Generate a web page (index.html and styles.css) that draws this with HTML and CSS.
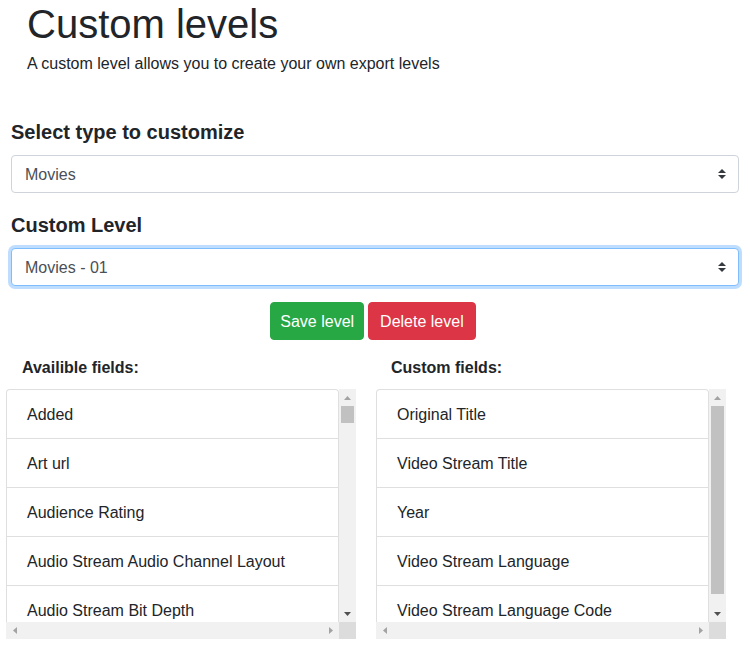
FILE: index.html
```html
<!DOCTYPE html>
<html lang="en">
<head>
<meta charset="utf-8">
<title>Custom levels</title>
<link rel="stylesheet" href="styles.css">
</head>
<body>
<header class="intro">
  <h1 class="title">Custom levels</h1>
  <p class="lead">A custom level allows you to create your own export levels</p>
</header>

<section class="form">
  <h5 class="form-label">Select type to customize</h5>
  <div class="select">
    <span class="select-value">Movies</span>
    <svg class="select-arrow" width="8" height="10" viewBox="0 0 4 5"><path d="M2 0L0 2h4zm0 5L0 3h4z" fill="#343a40"/></svg>
  </div>

  <h5 class="form-label form-label-spaced">Custom Level</h5>
  <div class="select select-focus">
    <span class="select-value">Movies - 01</span>
    <svg class="select-arrow" width="8" height="10" viewBox="0 0 4 5"><path d="M2 0L0 2h4zm0 5L0 3h4z" fill="#343a40"/></svg>
  </div>

  <div class="actions">
    <button class="btn btn-success">Save level</button>
    <button class="btn btn-danger">Delete level</button>
  </div>
</section>

<section class="fields">
  <div class="field-col">
    <div class="field-label">Availible fields:</div>
    <div class="scrollbox">
      <div class="viewport">
        <ul class="list-group">
          <li class="list-item">Added</li>
          <li class="list-item">Art url</li>
          <li class="list-item">Audience Rating</li>
          <li class="list-item">Audio Stream Audio Channel Layout</li>
          <li class="list-item">Audio Stream Bit Depth</li>
        </ul>
      </div>
      <div class="vbar">
        <div class="sb-btn"><svg width="7" height="4" viewBox="0 0 7 4"><path d="M0 4L3.5 0L7 4z" fill="#a3a3a3"/></svg></div>
        <div class="vtrack"><div class="thumb thumb-small"></div></div>
        <div class="sb-btn"><svg width="7" height="4" viewBox="0 0 7 4"><path d="M0 0L3.5 4L7 0z" fill="#505050"/></svg></div>
      </div>
      <div class="hbar">
        <div class="sb-btn"><svg width="4" height="7" viewBox="0 0 4 7"><path d="M4 0L0 3.5L4 7z" fill="#a3a3a3"/></svg></div>
        <div class="sb-btn"><svg width="4" height="7" viewBox="0 0 4 7"><path d="M0 0L4 3.5L0 7z" fill="#a3a3a3"/></svg></div>
      </div>
      <div class="corner"></div>
    </div>
  </div>

  <div class="field-col">
    <div class="field-label field-label-right">Custom fields:</div>
    <div class="scrollbox">
      <div class="viewport">
        <ul class="list-group">
          <li class="list-item">Original Title</li>
          <li class="list-item">Video Stream Title</li>
          <li class="list-item">Year</li>
          <li class="list-item">Video Stream Language</li>
          <li class="list-item">Video Stream Language Code</li>
        </ul>
      </div>
      <div class="vbar">
        <div class="sb-btn"><svg width="7" height="4" viewBox="0 0 7 4"><path d="M0 4L3.5 0L7 4z" fill="#a3a3a3"/></svg></div>
        <div class="vtrack"><div class="thumb thumb-large"></div></div>
        <div class="sb-btn"><svg width="7" height="4" viewBox="0 0 7 4"><path d="M0 0L3.5 4L7 0z" fill="#505050"/></svg></div>
      </div>
      <div class="hbar">
        <div class="sb-btn"><svg width="4" height="7" viewBox="0 0 4 7"><path d="M4 0L0 3.5L4 7z" fill="#a3a3a3"/></svg></div>
        <div class="sb-btn"><svg width="4" height="7" viewBox="0 0 4 7"><path d="M0 0L4 3.5L0 7z" fill="#a3a3a3"/></svg></div>
      </div>
      <div class="corner"></div>
    </div>
  </div>
</section>
</body>
</html>
```

FILE: styles.css
```css
* { box-sizing: border-box; }

html, body {
  margin: 0;
  padding: 0;
  background: #fff;
}

body {
  font-family: "Liberation Sans", Arial, sans-serif;
  font-size: 16px;
  line-height: 24px;
  color: #212529;
  width: 750px;
  height: 661px;
  overflow: hidden;
}

.intro {
  padding-left: 27px;
}

.title {
  margin: 0;
  font-size: 40px;
  line-height: 48px;
  font-weight: 400;
}

.lead {
  margin: 4px 0 0;
  font-size: 16px;
  line-height: 24px;
}

.form {
  padding: 0 11px;
  margin-top: 44px;
}

.form-label {
  margin: 0 0 11px;
  font-size: 20px;
  line-height: 24px;
  font-weight: 700;
}

.form-label-spaced {
  margin-top: 20px;
}

.select {
  height: 38px;
  border: 1px solid #ced4da;
  border-radius: 4px;
  padding: 1px 12px 0 13px;
  display: flex;
  align-items: center;
  justify-content: space-between;
  color: #495057;
  background: #fff;
}

.select-focus {
  border-color: #80bdff;
  box-shadow: 0 0 0 3px rgba(0, 123, 255, 0.25);
}

.select-arrow {
  display: block;
  margin-top: -1px;
}

.actions {
  margin-top: 16px;
  display: flex;
  justify-content: center;
  gap: 4px;
  padding-right: 4px;
}

.btn {
  height: 38px;
  padding: 2px 9px 0;
  border-radius: 4px;
  font-family: inherit;
  font-size: 16px;
  line-height: 24px;
  color: #fff;
  cursor: pointer;
}

.btn-success {
  background: #28a745;
  border: 1px solid #28a745;
}

.btn-danger {
  background: #dc3545;
  border: 1px solid #dc3545;
  padding-left: 11px;
  padding-right: 11px;
}

.fields {
  margin-top: 16px;
  padding-left: 6px;
  display: flex;
  gap: 20px;
}

.field-col {
  width: 350px;
}

.field-label {
  padding-left: 16px;
  font-weight: 700;
  line-height: 24px;
  margin-bottom: 9px;
}

.field-label-right {
  padding-left: 15px;
}

.scrollbox {
  display: grid;
  grid-template-columns: 333px 17px;
  grid-template-rows: 233px 17px;
}

.viewport {
  overflow: hidden;
}

.list-group {
  list-style: none;
  margin: 0;
  padding: 0;
}

.list-item {
  padding: 13px 20px 11px;
  line-height: 24px;
  border: 1px solid rgba(0, 0, 0, 0.125);
  margin-bottom: -1px;
  background: #fff;
}

.list-item:first-child {
  border-top-left-radius: 4px;
  border-top-right-radius: 4px;
}

.vbar {
  background: #f1f1f1;
  display: flex;
  flex-direction: column;
}

.sb-btn {
  width: 17px;
  height: 17px;
  flex: none;
  display: flex;
  align-items: center;
  justify-content: center;
}

.sb-btn svg {
  display: block;
}

.vtrack {
  flex: 1;
  padding: 0 2px;
}

.thumb {
  background: #c1c1c1;
}

.thumb-small {
  height: 17px;
}

.thumb-large {
  height: 188px;
}

.hbar {
  background: #f1f1f1;
  display: flex;
  justify-content: space-between;
}

.corner {
  background: #dcdcdc;
}
```
